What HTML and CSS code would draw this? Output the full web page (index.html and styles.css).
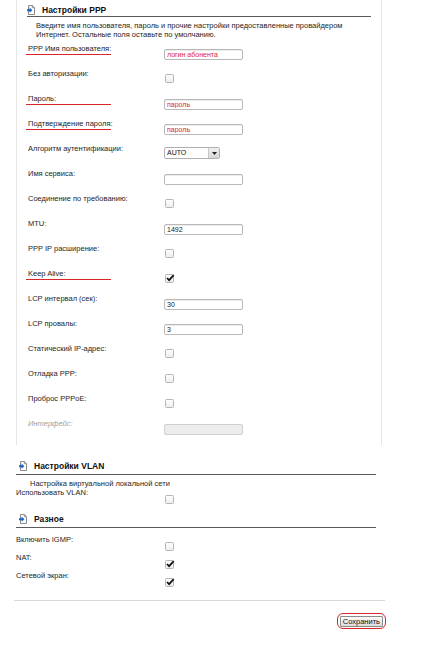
FILE: index.html
```html
<!DOCTYPE html>
<html lang="ru">
<head>
    <meta charset="UTF-8">
    <meta name="viewport" content="width=device-width, initial-scale=1.0">
    <title>Настройки PPP</title>
    <link rel="stylesheet" href="styles.css">
</head>
<body>
    <div class="panel">
        <h2 class="head">
            <svg class="ico" width="8" height="10" viewBox="0 0 8 10"><path d="M1.5 .5h3.8l2.2 2.2v6.8h-6z" fill="#fff" stroke="#8c8c8c"/><path d="M5.3 .5v2.2h2.2" fill="none" stroke="#8c8c8c"/><path d="M0 4.2h2.6v-1.6l2.8 2.6-2.8 2.6v-1.6h-2.6z" fill="#1b63c6"/></svg>
            Настройки PPP
        </h2>
        <p class="note">Введите имя пользователя, пароль и прочие настройки предоставленные провайдером<br>Интернет. Остальные поля оставьте по умолчанию.</p>
        <div class="rows">
            <div class="row"><span class="lbl mark">PPP Имя пользователя:</span><input class="field red" type="text" value="логин абонента"></div>
            <div class="row"><span class="lbl">Без авторизации:</span><span class="box"></span></div>
            <div class="row"><span class="lbl mark">Пароль:</span><input class="field red" type="text" value="пароль"></div>
            <div class="row"><span class="lbl mark">Подтверждение пароля:</span><input class="field red" type="text" value="пароль"></div>
            <div class="row"><span class="lbl">Алгоритм аутентификации:</span>
                <span class="pick"><span class="pick-val">AUTO</span><span class="pick-btn"><svg width="5" height="3" viewBox="0 0 5 3"><path d="M0 0h5l-2.5 3z" fill="#222"/></svg></span></span>
            </div>
            <div class="row"><span class="lbl">Имя сервиса:</span><input class="field" type="text" value=""></div>
            <div class="row"><span class="lbl">Соединение по требованию:</span><span class="box"></span></div>
            <div class="row"><span class="lbl">MTU:</span><input class="field" type="text" value="1492"></div>
            <div class="row"><span class="lbl">PPP IP расширение:</span><span class="box"></span></div>
            <div class="row"><span class="lbl mark">Keep Alive:</span><span class="box on"><svg width="9" height="9" viewBox="0 0 9 9"><path d="M1 4l2.1 2.2 4.6-5" fill="none" stroke="#111" stroke-width="1.7"/></svg></span></div>
            <div class="row"><span class="lbl">LCP интервал (сек):</span><input class="field" type="text" value="30"></div>
            <div class="row"><span class="lbl">LCP провалы:</span><input class="field" type="text" value="3"></div>
            <div class="row"><span class="lbl">Статический IP-адрес:</span><span class="box"></span></div>
            <div class="row"><span class="lbl">Отладка PPP:</span><span class="box"></span></div>
            <div class="row"><span class="lbl">Проброс PPPoE:</span><span class="box"></span></div>
            <div class="row"><span class="lbl off">Интерфейс:</span><input class="field" type="text" value="" disabled></div>
        </div>
    </div>

    <div class="group">
        <h2 class="head">
            <svg class="ico" width="8" height="10" viewBox="0 0 8 10"><path d="M1.5 .5h3.8l2.2 2.2v6.8h-6z" fill="#fff" stroke="#8c8c8c"/><path d="M5.3 .5v2.2h2.2" fill="none" stroke="#8c8c8c"/><path d="M0 4.2h2.6v-1.6l2.8 2.6-2.8 2.6v-1.6h-2.6z" fill="#1b63c6"/></svg>
            Настройки VLAN
        </h2>
        <p class="note">Настройка виртуальной локальной сети</p>
        <div class="row"><span class="lbl">Использовать VLAN:</span><span class="box"></span></div>

        <h2 class="head">
            <svg class="ico" width="8" height="10" viewBox="0 0 8 10"><path d="M1.5 .5h3.8l2.2 2.2v6.8h-6z" fill="#fff" stroke="#8c8c8c"/><path d="M5.3 .5v2.2h2.2" fill="none" stroke="#8c8c8c"/><path d="M0 4.2h2.6v-1.6l2.8 2.6-2.8 2.6v-1.6h-2.6z" fill="#1b63c6"/></svg>
            Разное
        </h2>
        <div class="rows">
            <div class="row"><span class="lbl">Включить IGMP:</span><span class="box"></span></div>
            <div class="row"><span class="lbl">NAT:</span><span class="box on"><svg width="9" height="9" viewBox="0 0 9 9"><path d="M1 4l2.1 2.2 4.6-5" fill="none" stroke="#111" stroke-width="1.7"/></svg></span></div>
            <div class="row"><span class="lbl">Сетевой экран:</span><span class="box on"><svg width="9" height="9" viewBox="0 0 9 9"><path d="M1 4l2.1 2.2 4.6-5" fill="none" stroke="#111" stroke-width="1.7"/></svg></span></div>
        </div>
    </div>

    <div class="rule"></div>
    <div class="foot">
        <span class="ring"><button class="btn" type="button">Сохранить</button></span>
    </div>
</body>
</html>
```

FILE: styles.css
```css
body {
    margin: 0;
    background: #fff;
    font-family: "Liberation Sans", Arial, sans-serif;
    font-size: 7.5px;
    color: #1e1e1e;
}
.panel {
    box-sizing: border-box;
    margin-left: 16px;
    width: 366px;
    height: 445px;
    border-left: 1px solid #e6e6e6;
    border-right: 1px solid #e6e6e6;
}
.head {
    display: flex;
    align-items: center;
    gap: 7px;
    margin: 0 10px;
    padding: 4px 0 0 0;
    line-height: 12px;
    font-size: 8.5px;
    font-weight: bold;
    color: #111;
    border-bottom: 1px solid #5a5a5a;
}
.ico {
    display: block;
    flex: none;
}
.note {
    margin: 4px 0 0 19px;
    line-height: 9px;
}
.rows {
    margin-top: 5px;
    padding-left: 11px;
}
.row {
    display: grid;
    grid-template-columns: 136px auto;
    align-items: start;
    height: 25px;
}
.lbl {
    line-height: 10px;
    white-space: nowrap;
}
.mark {
    width: 83px;
    margin-left: -2px;
    padding-left: 2px;
    border-bottom: 1.5px solid #d9252a;
}
.off {
    color: #a0a0a0;
    font-style: italic;
}
.field {
    box-sizing: border-box;
    width: 79px;
    height: 11px;
    margin: 5px 0 0;
    padding: 0 2px;
    border: 1px solid #b8b8b8;
    border-radius: 2px;
    background: #fff;
    box-shadow: inset 0 1px 0 #ececec;
    font-family: inherit;
    font-size: 7px;
    color: #222;
    outline: none;
}
.field.red {
    color: #e0242a;
}
.field:disabled {
    background: #ececec;
    border-color: #cfcfcf;
}
.box {
    box-sizing: border-box;
    display: block;
    width: 9px;
    height: 9px;
    margin: 5px 0 0 1px;
    border: 1px solid #b5b5b5;
    border-radius: 1.5px;
    background: linear-gradient(#fdfdfd, #eeeeee);
    overflow: visible;
}
.box svg {
    display: block;
    margin: -1px 0 0 0;
    overflow: visible;
}
.pick {
    box-sizing: border-box;
    display: flex;
    width: 56px;
    height: 12px;
    margin-top: 3px;
    border: 1px solid #b0b0b0;
    border-radius: 2px;
    background: #fff;
}
.pick-val {
    flex: 1;
    padding-left: 2px;
    line-height: 10px;
    font-size: 7px;
    color: #111;
}
.pick-btn {
    display: flex;
    align-items: center;
    justify-content: center;
    width: 10px;
    background: linear-gradient(#f0f0f0, #d6d6d6);
    border-left: 1px solid #c8c8c8;
}
.group {
    margin-left: 16px;
    width: 360px;
}
.group .head {
    margin: 15px 0 0;
    padding: 0 0 2px 3px;
}
.group .row + .head {
    margin-top: 7px;
}
.group .note {
    margin: 4px 0 0 14px;
}
.group .rows {
    margin-top: 0;
    padding-left: 0;
    padding-top: 7px;
}
.group .row {
    grid-template-columns: 148px auto;
    height: 18px;
}
.group .box {
    margin-top: 7px;
}
.rule {
    margin: 11px 0 0 14px;
    width: 371px;
    border-top: 1px solid #d8d8d8;
}
.foot {
    display: flex;
    justify-content: flex-end;
    width: 386px;
    padding-top: 12px;
}
.ring {
    display: block;
    padding: 2px 2px 1px;
    border: 1.5px solid #d9252a;
    border-radius: 6px;
}
.btn {
    display: block;
    height: 11px;
    padding: 0 2px;
    border: 1px solid #8a8a8a;
    border-radius: 1px;
    background: linear-gradient(#fbfbfb, #dcdcdc);
    font-family: inherit;
    font-size: 7.5px;
    line-height: 9px;
    color: #111;
}
```
